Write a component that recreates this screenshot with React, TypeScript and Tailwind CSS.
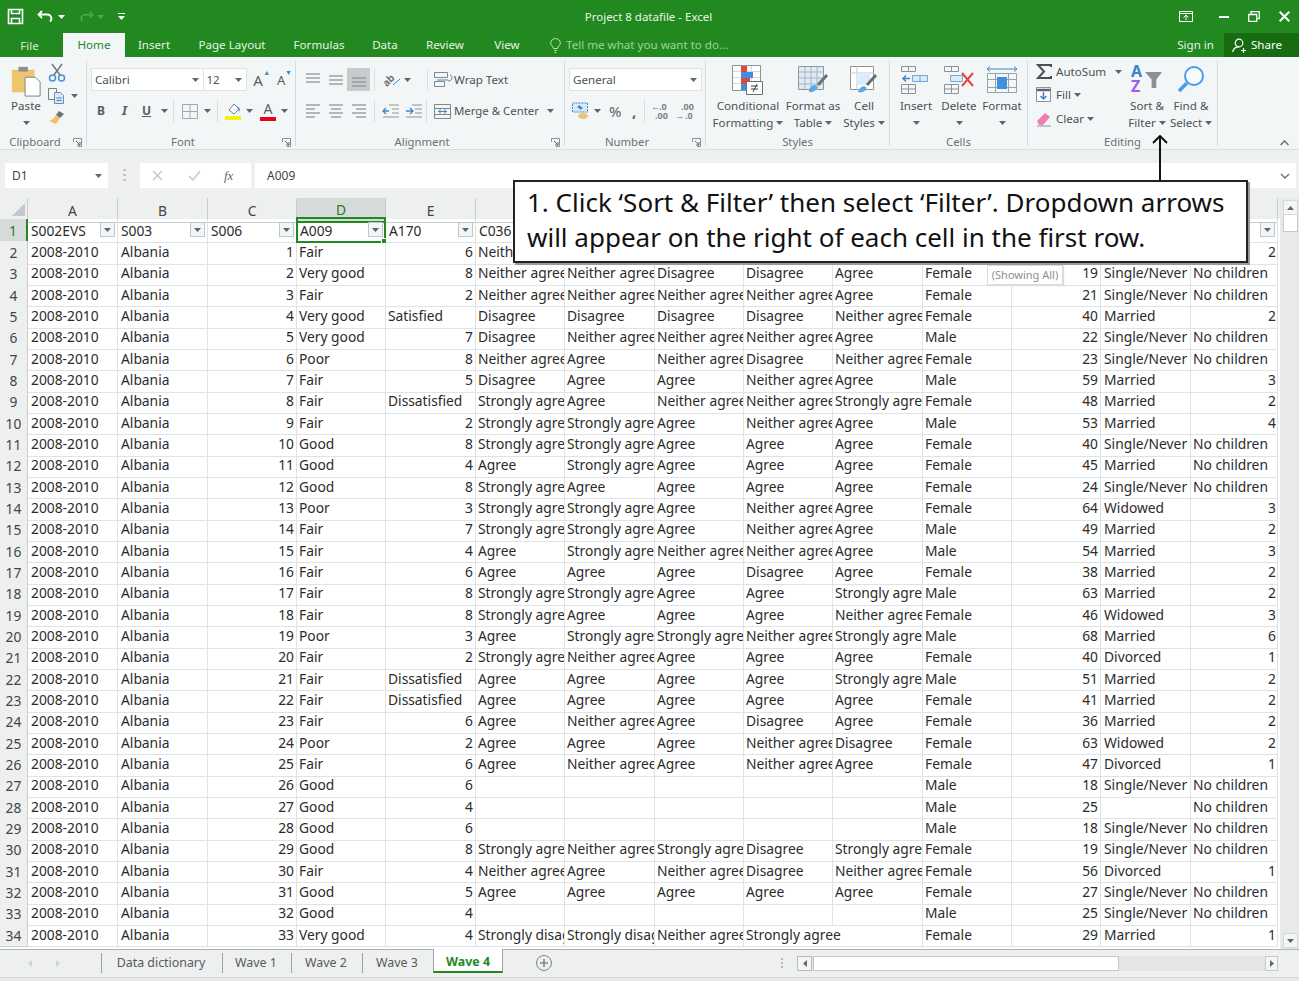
import React from 'react';

const F = "[font-family:'Noto_Sans','Liberation_Sans',sans-serif]";

const NA = 'Neither agree';
const SA = 'Strongly agree';
const SD = 'Strongly disagree';
const AG = 'Agree';
const DI = 'Disagree';
const SN = 'Single/Never';
const NC = 'No children';
const DS = 'Dissatisfied';

type Row = (string | number)[];

// C, D, E, F, G, H, I, J, K, L, M, N (row 2 is mostly behind the callout)
const ROWS: Row[] = [
  [1, 'Fair', 6, NA, '', '', '', '', '', '', '', 2],
  [2, 'Very good', 8, NA, NA, DI, DI, AG, 'Female', 19, SN, NC],
  [3, 'Fair', 2, NA, NA, NA, NA, AG, 'Female', 21, SN, NC],
  [4, 'Very good', 'Satisfied', DI, DI, DI, DI, NA, 'Female', 40, 'Married', 2],
  [5, 'Very good', 7, DI, NA, NA, NA, AG, 'Male', 22, SN, NC],
  [6, 'Poor', 8, NA, AG, NA, DI, NA, 'Female', 23, SN, NC],
  [7, 'Fair', 5, DI, AG, AG, NA, AG, 'Male', 59, 'Married', 3],
  [8, 'Fair', DS, SA, AG, NA, NA, SA, 'Female', 48, 'Married', 2],
  [9, 'Fair', 2, SA, SA, AG, NA, AG, 'Male', 53, 'Married', 4],
  [10, 'Good', 8, SA, SA, AG, AG, AG, 'Female', 40, SN, NC],
  [11, 'Good', 4, AG, SA, AG, AG, AG, 'Female', 45, 'Married', NC],
  [12, 'Good', 8, SA, AG, AG, AG, AG, 'Female', 24, SN, NC],
  [13, 'Poor', 3, SA, SA, AG, NA, AG, 'Female', 64, 'Widowed', 3],
  [14, 'Fair', 7, SA, SA, AG, NA, AG, 'Male', 49, 'Married', 2],
  [15, 'Fair', 4, AG, SA, NA, NA, AG, 'Male', 54, 'Married', 3],
  [16, 'Fair', 6, AG, AG, AG, DI, AG, 'Female', 38, 'Married', 2],
  [17, 'Fair', 8, SA, SA, AG, AG, SA, 'Male', 63, 'Married', 2],
  [18, 'Fair', 8, SA, AG, AG, AG, NA, 'Female', 46, 'Widowed', 3],
  [19, 'Poor', 3, AG, SA, SA, NA, SA, 'Male', 68, 'Married', 6],
  [20, 'Fair', 2, SA, NA, AG, AG, AG, 'Female', 40, 'Divorced', 1],
  [21, 'Fair', DS, AG, AG, AG, AG, SA, 'Male', 51, 'Married', 2],
  [22, 'Fair', DS, AG, AG, AG, AG, AG, 'Female', 41, 'Married', 2],
  [23, 'Fair', 6, AG, NA, AG, DI, AG, 'Female', 36, 'Married', 2],
  [24, 'Poor', 2, AG, AG, AG, NA, DI, 'Female', 63, 'Widowed', 2],
  [25, 'Fair', 6, AG, NA, AG, NA, AG, 'Female', 47, 'Divorced', 1],
  [26, 'Good', 6, '', '', '', '', '', 'Male', 18, SN, NC],
  [27, 'Good', 4, '', '', '', '', '', 'Male', 25, '', NC],
  [28, 'Good', 6, '', '', '', '', '', 'Male', 18, SN, NC],
  [29, 'Good', 8, SA, NA, SA, DI, SA, 'Female', 19, SN, NC],
  [30, 'Fair', 4, NA, AG, NA, DI, NA, 'Female', 56, 'Divorced', 1],
  [31, 'Good', 5, AG, AG, AG, AG, AG, 'Female', 27, SN, NC],
  [32, 'Good', 4, '', '', '', '', '', 'Male', 25, SN, NC],
  [33, 'Very good', 4, SD, SD, NA, SA, '', 'Female', 29, 'Married', 1],
];

const GRID = 'grid grid-cols-[28px_90px_90px_89px_89px_90px_89px_90px_89px_89px_90px_89px_89px_90px_87px]';

const Caret = ({ className = '' }: { className?: string }) => (
  <svg width="7" height="4" viewBox="0 0 7 4" className={className}>
    <path d="M0 0h7L3.500 4z" fill="#5f6668" />
  </svg>
);

const FilterBtn = () => (
  <span className="absolute right-[2px] top-[3px] flex h-[15px] w-[15px] items-center justify-center border border-[#b9c9cf] bg-[#f2f5f6]">
    <Caret />
  </span>
);

const Launcher = ({ className = '' }: { className?: string }) => (
  <svg width="9" height="9" viewBox="0 0 9 9" className={className}>
    <path d="M.5 4V.5H8.500V8.500H5" fill="none" stroke="#8b9193" />
    <path d="M3 3l4 4M7 4v3H4" fill="none" stroke="#62686a" />
  </svg>
);

const Lines = ({ kind }: { kind: 'left' | 'center' | 'right' }) => {
  const x = kind === 'left' ? [1, 1, 1, 1] : kind === 'center' ? [1, 3, 1, 3] : [1, 5, 1, 5];
  const w = kind === 'left' ? [14, 9, 14, 9] : [14, 10, 14, 10];
  return (
    <svg width="16" height="14" viewBox="0 0 16 14" fill="none" stroke="#8d9496" strokeWidth="1.300">
      {[1, 5, 9, 13].map((y, i) => <path key={y} d={`M${x[i]} ${y}h${w[i]}`} />)}
    </svg>
  );
};

const VAlign = ({ y }: { y: number }) => (
  <svg width="16" height="14" viewBox="0 0 16 14" fill="none" stroke="#8d9496" strokeWidth="1.300">
    {[0, 4, 8].map(d => <path key={d} d={`M1 ${y + d}h14`} />)}
  </svg>
);

const Sep = () => <span className="block h-[22px] w-px bg-[#d9dddf]" />;

const Group = ({ label, launcher, className, children }: { label: string; launcher?: boolean; className: string; children: React.ReactNode }) => (
  <div className={`relative flex h-[85px] shrink-0 flex-col border-r border-[#d6dadc] ${className}`}>
    <div className="h-[73px] w-full shrink-0">{children}</div>
    <div className={`h-[16px] shrink-0 text-center text-[11.300px] leading-[16px] text-[#6b7173] ${launcher ? 'pr-[16px]' : ''}`}>
      {label}
      {launcher && <Launcher className="absolute right-[4px] top-[77px]" />}
    </div>
  </div>
);

const Big = ({ icon, l1, l2, caret, className }: { icon: React.ReactNode; l1: string; l2?: string; caret?: boolean; className: string }) => (
  <div className={`flex shrink-0 flex-col items-center text-[11.600px] leading-[17px] text-[#4c5153] ${className}`}>
    <div className="flex h-[34px] items-start pt-[3px]">{icon}</div>
    <div className="mt-[1px] whitespace-nowrap">{l1}</div>
    <div className="flex h-[17px] items-center gap-[3px] whitespace-nowrap">{l2}{caret && <Caret />}</div>
  </div>
);

const CellIconWrap = ({ children }: { children: React.ReactNode }) => (
  <svg width="32" height="30" viewBox="0 0 32 30">{children}</svg>
);

const CellGrid = ({ children }: { children?: React.ReactNode }) => (
  <g stroke="#8b9496" fill="none">{children}</g>
);

export default function App() {
  return (
    <div className={`flex h-[981px] w-[1299px] flex-col overflow-hidden bg-[#eef0f0] ${F}`}>
      {/* title bar */}
      <div className="relative flex h-[33px] shrink-0 items-center bg-[#21891f] text-white">
        <div className="flex items-center pl-[7px]">
          <svg width="17" height="17" viewBox="0 0 17 17" fill="none" stroke="#fff" strokeWidth="1.600">
            <path d="M1.500 1.500h14v14h-14zM4.500 1.500v4h8v-4M4.500 15.500v-5h8v5" />
          </svg>
          <svg width="18" height="14" viewBox="0 0 18 14" fill="none" stroke="#fff" strokeWidth="1.800" className="ml-[13px]">
            <path d="M5 1L1.500 4.500 5 8M2 4.500h8a4 4 0 0 1 3 7" />
          </svg>
          <Caret className="ml-[3px] [&>path]:fill-white" />
          <svg width="16" height="14" viewBox="0 0 18 14" fill="none" stroke="#4fa84d" strokeWidth="1.800" className="ml-[13px]">
            <path d="M13 1l3.500 3.500L13 8M16 4.500H8a4 4 0 0 0-3 7" />
          </svg>
          <Caret className="ml-[3px] [&>path]:fill-[#4fa84d]" />
          <svg width="7" height="8" viewBox="0 0 7 8" className="ml-[14px]" fill="#fff">
            <path d="M0 0h7v1H0zM0 3h7L3.500 7z" />
          </svg>
        </div>
        <div className="absolute inset-x-0 top-[8px] pr-[2px] text-center text-[11.500px] leading-[17px] text-[#e9f4e9]">Project 8 datafile - Excel</div>
        <div className="ml-auto flex items-center pr-[9px]">
          <svg width="14" height="12" viewBox="0 0 14 12" fill="none" stroke="#fff">
            <path d="M.5.500h13v10H.5zM.5 2.500h13" />
            <path d="M7 9V4.500M4.500 6.500L7 4l2.500 2.500" />
          </svg>
          <span className="ml-[26px] h-[2px] w-[10px] bg-white" />
          <svg width="12" height="11" viewBox="0 0 12 11" fill="none" stroke="#fff" strokeWidth="1.300" className="ml-[19px]">
            <path d="M.7 3.500h8v7h-8zM3 3.500V.7h8.300v7H8.700" />
          </svg>
          <svg width="11" height="11" viewBox="0 0 11 11" fill="none" stroke="#fff" strokeWidth="2" className="ml-[19px]">
            <path d="M.7.700l9.600 9.600M10.300.700L.7 10.300" />
          </svg>
        </div>
      </div>

      {/* tabs */}
      <div className="flex h-[24px] shrink-0 items-stretch bg-[#21891f] text-[11.600px] text-[#e6f3e6]">
        <div className="flex w-[59px] items-center justify-center pt-[2px] text-[#d6ecd6]">File</div>
        <div className="ml-[4px] flex w-[62px] items-center justify-center bg-[#f3f6f7] text-[#21891f]">Home</div>
        <div className="flex w-[58px] items-center justify-center">Insert</div>
        <div className="flex w-[98px] items-center justify-center">Page Layout</div>
        <div className="flex w-[76px] items-center justify-center">Formulas</div>
        <div className="flex w-[56px] items-center justify-center">Data</div>
        <div className="flex w-[64px] items-center justify-center">Review</div>
        <div className="flex w-[60px] items-center justify-center">View</div>
        <div className="ml-[13px] flex items-center gap-[5px] text-[#9ed39d]">
          <svg width="11" height="15" viewBox="0 0 11 15" fill="none" stroke="#b9e0b8">
            <path d="M3.500 10.500C3 8 .7 7.500.7 5a4.800 4.500 0 0 1 9.600 0c0 2.500-2.300 3-2.800 5.500zM4 12.500h3M4.500 14.500h2" />
          </svg>
          Tell me what you want to do...
        </div>
        <div className="ml-auto flex items-center pr-[10px]">Sign in</div>
        <div className="flex w-[75px] items-center gap-[4px] bg-[#176c12] pl-[8px] text-white">
          <svg width="15" height="15" viewBox="0 0 15 15" fill="none" stroke="#fff" strokeWidth="1.200">
            <circle cx="7" cy="5" r="3.800" />
            <path d="M.7 14c.5-3.500 3-5.200 6.300-5.200M9 12.500h5M11.500 10v5" />
          </svg>
          Share
        </div>
      </div>

      {/* ribbon */}
      <div className="relative flex h-[93px] shrink-0 items-start border-b border-[#dcdfe0] bg-[#f3f6f7] pt-[4px]">
        <Group label="Clipboard" launcher className="w-[87px]">
          <div className="flex pt-[1px]">
            <Big
              className="ml-[8px] w-[36px]"
              l1="Paste"
              caret
              icon={
                <svg width="32" height="32" viewBox="0 0 32 34">
                  <path d="M1 5h24v24H1z" fill="#efc46f" />
                  <path d="M8 2h10v5H8z" fill="#8a8f91" />
                  <path d="M15 13h11l5 5v15H15z" fill="#fff" stroke="#777d7f" />
                </svg>
              }
            />
            <div className="ml-[4px] flex flex-col items-start pt-[1px]">
              <svg width="18" height="19" viewBox="0 0 18 19" fill="none">
                <path d="M4 1l8 11M14 1L6 12" stroke="#6d7476" strokeWidth="1.400" />
                <circle cx="4.500" cy="15" r="3" stroke="#4a90d9" strokeWidth="1.500" />
                <circle cx="13.500" cy="15" r="3" stroke="#4a90d9" strokeWidth="1.500" />
              </svg>
              <div className="mt-[6px] flex items-center gap-[6px]">
                <svg width="17" height="16" viewBox="0 0 17 16" fill="none" stroke="#7a8183">
                  <path d="M.5.500h8v11h-8z" fill="#f6f7f7" />
                  <path d="M6.500 4.500h6l3 3v8h-9z" fill="#dbe7f3" stroke="#6b8db0" />
                  <path d="M8.500 10h5M8.500 12.500h5" stroke="#3d84cc" />
                </svg>
                <Caret />
              </div>
              <svg width="17" height="15" viewBox="0 0 17 15" className="mt-[6px]">
                <path d="M11 1l5 3-4 4-4-3z" fill="#6d7476" />
                <path d="M8 5l4 3-4 6-7-3 4-2z" fill="#efbf6a" />
              </svg>
            </div>
          </div>
        </Group>

        <Group label="Font" launcher className="w-[209px]">
          <div className="pl-[4px] pt-[7px]">
            <div className="flex items-center">
              <div className="flex h-[23px] w-[113px] items-center justify-between border border-r-0 border-[#e0e3e4] bg-white pl-[3px] pr-[4px] pt-[1px] text-[11.600px] text-[#4c5153]">
                Calibri <Caret />
              </div>
              <div className="flex h-[23px] w-[44px] items-center justify-between border border-[#e0e3e4] bg-white pl-[2px] pr-[4px] pt-[1px] text-[11.600px] text-[#4c5153]">
                12 <Caret />
              </div>
              <span className="relative ml-[6px] w-[20px] text-[15px] leading-[20px] text-[#5a6062]">A<span className="absolute -top-[2px] left-[10px] text-[7px] leading-[10px] text-[#3d84cc]">▲</span></span>
              <span className="relative ml-[4px] w-[18px] text-[13px] leading-[20px] text-[#5a6062]">A<span className="absolute -top-[2px] left-[8px] text-[7px] leading-[10px] text-[#3d84cc]">▼</span></span>
            </div>
            <div className="mt-[8px] flex h-[24px] items-center text-[#5a6062]">
              <span className="w-[20px] pl-[6px] text-[12px] font-bold">B</span>
              <span className="ml-[9px] w-[18px] pl-[2px] text-[13px] font-bold italic">I</span>
              <span className="ml-[4px] w-[16px] text-[12px] font-bold underline">U</span>
              <Caret className="ml-[3px]" />
              <span className="ml-[5px]"><Sep /></span>
              <svg width="16" height="15" viewBox="0 0 16 15" fill="none" stroke="#a3a9ab" className="ml-[8px]">
                <path d="M.5.500h15v14H.5zM8 .500v14M.5 7.500h15" />
              </svg>
              <Caret className="ml-[6px]" />
              <span className="ml-[6px]"><Sep /></span>
              <svg width="18" height="20" viewBox="0 0 18 20" className="ml-[6px]">
                <path d="M5 9l5-6 5 5-5 5z" fill="#fff" stroke="#777d7f" />
                <path d="M13 5l3 3-1 3z" fill="#3d84cc" />
                <path d="M1 15h16v4H1z" fill="#f2f20c" />
              </svg>
              <Caret className="ml-[4px]" />
              <span className="relative ml-[7px] flex h-[20px] w-[16px] justify-center text-[14px] leading-[16px] text-[#5a6062]">
                A<span className="absolute bottom-0 h-[4px] w-[16px] bg-[#e8001c]" />
              </span>
              <Caret className="ml-[5px]" />
            </div>
          </div>
        </Group>

        <Group label="Alignment" launcher className="w-[269px]">
          <div className="pl-[6px] pt-[7px]">
            <div className="flex h-[23px] items-center">
              <span className="flex w-[22px] justify-center"><VAlign y={1} /></span>
              <span className="flex w-[23px] justify-center"><VAlign y={3} /></span>
              <span className="flex h-[23px] w-[23px] items-center justify-center bg-[#c6cbcc]"><VAlign y={5} /></span>
              <span className="ml-[4px]"><Sep /></span>
              <span className="relative ml-[7px] flex h-[16px] w-[19px] items-center">
                <span className="block -rotate-45 text-[10px] font-bold leading-[10px] text-[#6a7173]">ab</span>
                <svg width="9" height="9" viewBox="0 0 9 9" fill="none" stroke="#3d84cc" className="absolute right-0 top-[5px]"><path d="M1 8l7-6" /></svg>
              </span>
              <Caret className="ml-[3px]" />
              <span className="ml-[16px]"><Sep /></span>
              <svg width="20" height="16" viewBox="0 0 20 16" fill="none" stroke="#80888a" className="ml-[6px]">
                <path d="M.5.500h13v5H.5zM.5 9.500h10v5H.5z" />
                <path d="M3 8h11" stroke="#3d84cc" />
                <path d="M16 3c3 1 3 6-2 6" stroke="#3d84cc" />
              </svg>
              <span className="text-[11.600px] text-[#4c5153]">Wrap Text</span>
            </div>
            <div className="mt-[8px] flex h-[24px] items-center">
              <span className="flex w-[22px] justify-center"><Lines kind="left" /></span>
              <span className="flex w-[23px] justify-center"><Lines kind="center" /></span>
              <span className="flex w-[23px] justify-center"><Lines kind="right" /></span>
              <span className="ml-[4px]"><Sep /></span>
              <svg width="18" height="14" viewBox="0 0 18 14" fill="none" stroke="#8d9496" className="ml-[7px]">
                <path d="M7 1h10M10 5h7M10 9h7M1 13h16" />
                <path d="M7 7H1M4 4L1 7l3 3" stroke="#3d84cc" strokeWidth="1.300" />
              </svg>
              <svg width="18" height="14" viewBox="0 0 18 14" fill="none" stroke="#8d9496" className="ml-[5px]">
                <path d="M7 1h10M10 5h7M10 9h7M1 13h16" />
                <path d="M1 7h7M5 4l3 3-3 3" stroke="#3d84cc" strokeWidth="1.300" />
              </svg>
              <span className="ml-[3px]"><Sep /></span>
              <svg width="18" height="15" viewBox="0 0 18 15" fill="none" stroke="#80888a" className="ml-[7px]">
                <path d="M.5.500h16v14H.5zM.5 4.500h16M.5 10.500h16M6 4.500v6M11 4.500v6" />
                <path d="M4 7.500h9" stroke="#3d84cc" />
              </svg>
              <span className="ml-[2px] text-[11.400px] text-[#4c5153]">Merge &amp; Center</span>
              <Caret className="ml-[8px]" />
            </div>
          </div>
        </Group>

        <Group label="Number" launcher className="w-[141px]">
          <div className="pl-[4px] pt-[7px]">
            <div className="flex h-[23px] w-[133px] items-center justify-between border border-[#e0e3e4] bg-white pl-[3px] pr-[4px] pt-[1px] text-[11.600px] text-[#4c5153]">
              General <Caret />
            </div>
            <div className="mt-[8px] flex h-[24px] items-center">
              <svg width="18" height="18" viewBox="0 0 18 18" className="ml-[3px]">
                <path d="M.5 1h15v9H.5z" fill="#dbe9f7" stroke="#3d84cc" strokeDasharray="2 1" />
                <path d="M5 5l3-2v4zM11 6L8 8V4z" fill="#3d84cc" />
                <ellipse cx="11" cy="14" rx="5" ry="3" fill="#efc46f" />
              </svg>
              <Caret className="ml-[4px]" />
              <span className="ml-[8px] w-[20px] text-[15px] leading-[20px] text-[#5a6062]">%</span>
              <span className="ml-[3px] w-[10px] text-[15px] font-bold leading-[18px] text-[#5a6062]">,</span>
              <span className="ml-[2px]"><Sep /></span>
              <span className="relative ml-[6px] h-[18px] w-[20px] text-[9px] font-bold leading-[9px] text-[#7b8284]">
                <span className="block pl-[8px]">.0</span><span className="block pl-[4px]">.00</span>
                <span className="absolute left-0 top-0 text-[9px] leading-[9px] text-[#3d84cc]">←</span>
              </span>
              <span className="relative ml-[4px] h-[18px] w-[20px] text-[9px] font-bold leading-[9px] text-[#7b8284]">
                <span className="block pl-[6px]">.00</span><span className="block pl-[10px]">.0</span>
                <span className="absolute bottom-0 left-0 text-[9px] leading-[9px] text-[#3d84cc]">→</span>
              </span>
            </div>
          </div>
        </Group>

        <Group label="Styles" className="w-[184px]">
          <div className="flex pl-[7px] pt-[1px]">
            <Big
              className="w-[70px]"
              l1="Conditional"
              l2="Formatting"
              caret
              icon={
                <svg width="32" height="31" viewBox="0 0 32 31">
                  <path d="M.5.500h28v25H.5z" fill="#fff" stroke="#8b9496" />
                  <path d="M9.500 1v24M19.500 1v24M1 6.500h27M1 12.500h27M1 18.500h27" stroke="#d5d9da" />
                  <path d="M9 1h6v6H9zM9 13h9v6H9z" fill="#e0473c" />
                  <path d="M9 7h12v6H9zM9 19h5v6H9z" fill="#3f8fe0" />
                  <path d="M14.500 16.500h16v13h-16z" fill="#fff" stroke="#6a7173" />
                  <path d="M19 21h7M19 24h7M25 19l-4 8" fill="none" stroke="#3d4244" />
                </svg>
              }
            />
            <Big
              className="w-[60px]"
              l1="Format as"
              l2="Table"
              caret
              icon={
                <svg width="32" height="31" viewBox="0 0 32 31">
                  <path d="M1.500 1.500h25v23h-25z" fill="#dcecf8" stroke="#8b9496" />
                  <path d="M1.500 7h25M1.500 13h25M1.500 19h25M8 1.500v23M14 1.500v23M20 1.500v23" stroke="#aab2b5" />
                  <path d="M12 25c2-5 6-6 8-4s-3 7-8 6z" fill="#58a8ea" />
                  <path d="M21 20l9-10" stroke="#6a7173" strokeWidth="3" />
                </svg>
              }
            />
            <Big
              className="w-[42px]"
              l1="Cell"
              l2="Styles"
              caret
              icon={
                <svg width="30" height="31" viewBox="0 0 30 31">
                  <path d="M1.500 1.500h23v23h-23z" fill="#fff" stroke="#8b9496" />
                  <path d="M1.500 8h23M8 1.500v23" stroke="#c5cacb" />
                  <path d="M8 8h13v12H8z" fill="#dcecf8" />
                  <path d="M9 27c1-5 6-7 8-5s-3 7-8 5z" fill="#58a8ea" />
                  <path d="M18 20l9-10" stroke="#6a7173" strokeWidth="3" />
                </svg>
              }
            />
          </div>
        </Group>

        <Group label="Cells" className="w-[138px]">
          <div className="flex pl-[4px] pt-[1px]">
            <Big
              className="w-[44px]"
              l1="Insert"
              caret
              icon={
                <CellIconWrap>
                  <CellGrid>
                    <path d="M1.500 1.500h14v5h-14zM8.500 1.500v5M1.500 19.500h14v9h-14zM1.500 24h14M8.500 19.500v9" />
                    <path d="M12.500 10.500h15v6h-15zM20 10.500v6" stroke="#6ea7d8" fill="#dcecf8" />
                  </CellGrid>
                  <path d="M10 13.500H3M6 10.500l-3 3 3 3" fill="none" stroke="#3d84cc" strokeWidth="1.500" />
                </CellIconWrap>
              }
            />
            <Big
              className="w-[42px]"
              l1="Delete"
              caret
              icon={
                <CellIconWrap>
                  <CellGrid>
                    <path d="M1.500 1.500h14v5h-14zM8.500 1.500v5M1.500 19.500h14v9h-14zM1.500 24h14M8.500 19.500v9" />
                    <path d="M7.500 10.500h12v6h-12z" stroke="#6ea7d8" fill="#dcecf8" />
                  </CellGrid>
                  <path d="M19 8l11 13M30 8L19 21" fill="none" stroke="#e0473c" strokeWidth="2" />
                </CellIconWrap>
              }
            />
            <Big
              className="w-[44px]"
              l1="Format"
              caret
              icon={
                <svg width="32" height="31" viewBox="0 0 32 31" fill="none">
                  <path d="M1 4h30M4 1.500l-3 2.500 3 2.500M28 1.500l3 2.500-3 2.500" stroke="#3d84cc" />
                  <path d="M1.500 8.500h29v19h-29zM9.500 8.500v19M22.500 8.500v19M1.500 14.500h29M1.500 22.500h29" stroke="#9aa2a4" />
                  <path d="M11 12h10v12H11z" fill="#3f8fe0" />
                </svg>
              }
            />
          </div>
        </Group>

        <Group label="Editing" className="w-[190px]">
          <div className="flex pl-[8px]">
            <div className="-mt-[1px] w-[89px] text-[11.600px] text-[#4c5153]">
              <div className="flex h-[23px] items-center">
                <svg width="16" height="15" viewBox="0 0 16 15" fill="none" stroke="#4a5052" strokeWidth="2" className="mr-[4px]">
                  <path d="M15 3V1H2l6 6.500L2 14h13v-2" />
                </svg>
                AutoSum
                <Caret className="ml-[9px]" />
              </div>
              <div className="flex h-[24px] items-center">
                <svg width="16" height="16" viewBox="0 0 16 16" fill="none" className="mr-[4px]">
                  <path d="M.5.500h14v14H.5z" stroke="#8b9496" fill="#fff" />
                  <path d="M.5 3h14" stroke="#5f6668" strokeWidth="2.500" />
                  <path d="M7.500 5v7M4.500 9l3 3 3-3" stroke="#3d84cc" strokeWidth="1.500" />
                </svg>
                Fill
                <Caret className="ml-[3px]" />
              </div>
              <div className="flex h-[24px] items-center">
                <svg width="16" height="15" viewBox="0 0 16 15" className="mr-[4px]">
                  <path d="M1 9l8-8 5 4-7 8H3z" fill="#f27cb2" />
                  <path d="M1 14h14" stroke="#8b9496" />
                </svg>
                Clear
                <Caret className="ml-[3px]" />
              </div>
            </div>
            <div className="flex pt-[1px]">
              <Big
                className="w-[44px]"
                l1="Sort &"
                l2="Filter"
                caret
                icon={
                  <span className="relative block h-[29px] w-[30px]">
                    <span className="absolute -left-[1px] top-[-2px] text-[16px] font-bold leading-[16px] text-[#3d84cc]">A</span>
                    <span className="absolute -left-[1px] top-[13px] text-[16px] font-bold leading-[16px] text-[#9b5de5]">Z</span>
                    <svg width="17" height="17" viewBox="0 0 18 18" className="absolute left-[13px] top-[7px]">
                      <path d="M0 0h18l-6 8v9H7V8z" fill="#8a9092" />
                    </svg>
                  </span>
                }
              />
              <Big
                className="w-[44px]"
                l1="Find &"
                l2="Select"
                caret
                icon={
                  <svg width="30" height="30" viewBox="0 0 30 30" fill="none" stroke="#4a9be8">
                    <circle cx="18" cy="11" r="9" strokeWidth="2" fill="#f8fbfe" />
                    <path d="M11 18L3 26" strokeWidth="3.500" />
                  </svg>
                }
              />
            </div>
          </div>
        </Group>

        <svg width="9" height="6" viewBox="0 0 9 6" fill="none" stroke="#6a7173" strokeWidth="1.500" className="ml-auto mr-[10px] mt-[79px]">
          <path d="M.5 5l4-4 4 4" />
        </svg>
      </div>

      {/* formula bar */}
      <div className="flex h-[48px] shrink-0 items-start bg-[#eef0f0] pt-[13px]">
        <div className="ml-[5px] flex h-[25px] w-[103px] items-center justify-between bg-white pl-[7px] pr-[6px] text-[12px] text-[#444]">
          D1 <Caret />
        </div>
        <div className="ml-[15px] mt-[6px] flex h-[12px] w-[3px] flex-col justify-between">
          <span className="h-[2px] bg-[#c2c6c7]" /><span className="h-[2px] bg-[#c2c6c7]" /><span className="h-[2px] bg-[#c2c6c7]" />
        </div>
        <div className="ml-[14px] flex h-[25px] w-[111px] items-center bg-white pl-[12px]">
          <svg width="11" height="11" viewBox="0 0 11 11" stroke="#c5c9ca" strokeWidth="1.500" fill="none"><path d="M1 1l9 9M10 1l-9 9" /></svg>
          <svg width="13" height="11" viewBox="0 0 13 11" stroke="#c5c9ca" strokeWidth="1.500" fill="none" className="ml-[25px]"><path d="M1 6l4 4 7-9" /></svg>
          <span className="ml-[23px] text-[13px] italic text-[#666] [font-family:'Liberation_Serif',serif]">fx</span>
        </div>
        <div className="ml-[4px] flex h-[25px] w-[1041px] items-center justify-between bg-white pl-[12px] pr-[6px] text-[12px] text-[#444]">
          A009
          <svg width="10" height="6" viewBox="0 0 10 6" fill="none" stroke="#777" strokeWidth="1.500"><path d="M1 1l4 4 4-4" /></svg>
        </div>
      </div>

      {/* sheet */}
      <div className="flex h-[751px] shrink-0 overflow-hidden">
        <div className="w-[1280px] shrink-0 overflow-hidden bg-white text-[13.800px] text-[#2b2b2b]">
          <div className={`${GRID} h-[21px] bg-[#eef0f0] text-[#444]`}>
            <div className="flex items-center justify-end border-b border-r border-[#c9cdce] pr-[2px]">
              <svg width="13" height="13" viewBox="0 0 13 13"><path d="M13 0v13H0z" fill="#c4c8c9" /></svg>
            </div>
            {['A', 'B', 'C', 'D', 'E', 'F', 'G', 'H', 'I', 'J', 'K', 'L', 'M', 'N'].map(c => (
              c === 'D'
                ? <div key={c} className="flex items-center justify-center border-b-2 border-r border-b-[#21891f] border-r-[#c9cdce] bg-[#d6dbda] pt-[2px] text-[#1f7a1d]">{c}</div>
                : <div key={c} className="flex items-center justify-center border-b border-r border-[#c9cdce] pt-[2px]">{c}</div>
            ))}
          </div>
          <div className={`${GRID} h-[22px]`}>
            <div className="flex items-center justify-center border-b border-r-2 border-b-[#c9cdce] border-r-[#21891f] bg-[#d6dbda] pt-[2px] text-[#1f7a1d]">1</div>
            {['S002EVS', 'S003', 'S006', 'A009', 'A170', 'C036', '', '', '', '', '', '', '', ''].map((h, i) => (
              <div key={i} className="relative whitespace-nowrap border-b border-r border-[#dfe3e3] pl-[3px] leading-[23px]">
                {h}
                <FilterBtn />
                {h === 'A009' && (
                  <span className="absolute -left-px -top-[2px] bottom-[-1px] right-[-1px] border-2 border-[#21891f]">
                    <span className="absolute -bottom-[3px] -right-[3px] h-[6px] w-[6px] border border-white bg-[#21891f]" />
                  </span>
                )}
              </div>
            ))}
          </div>
          {ROWS.map((r, i) => (
            <div key={i} className={`${GRID} h-[21.340px]`}>
              <div className="flex items-center justify-center border-b border-r border-[#c9cdce] bg-[#eef0f0] pt-[2px] text-[#444]">{i + 2}</div>
              <div className="overflow-hidden whitespace-nowrap border-b border-r border-[#dfe3e3] pl-[3px] leading-[22px]">2008-2010</div>
              <div className="overflow-hidden whitespace-nowrap border-b border-r border-[#dfe3e3] pl-[3px] leading-[22px]">Albania</div>
              {r.slice(0, 12).map((v, j) => {
                const overflow = v === SA && i === 32;
                const align = typeof v === 'number' ? (j === 11 ? 'pr-px text-right' : 'pr-[2px] text-right') : j === 10 ? 'pl-[3px]' : 'pl-[2px]';
                return (
                  <div
                    key={j}
                    className={`${overflow ? 'relative z-10 overflow-visible border-r-0' : 'overflow-hidden border-r'} whitespace-nowrap border-b border-[#dfe3e3] leading-[22px] ${align}`}
                  >
                    {v}
                  </div>
                );
              })}
            </div>
          ))}
        </div>
        <div className="flex w-[19px] shrink-0 flex-col items-center bg-[#e8eaea] pl-[1px] pt-[2px]">
          <span className="flex h-[15px] w-[15px] items-center justify-center border border-[#d4d8d9] bg-[#f4f6f6]"><Caret className="rotate-180" /></span>
          <span className="h-[17px] w-[15px] border border-t-0 border-[#c6cacb] bg-white" />
          <span className="mt-auto mb-[1px] flex h-[15px] w-[15px] items-center justify-center border border-[#d4d8d9] bg-[#f4f6f6]"><Caret /></span>
        </div>
      </div>

      {/* sheet tabs */}
      <div className="flex h-[28px] shrink-0 items-stretch border-t border-[#aeb3b4] bg-[#eef0f0] pb-[4px] pt-[3px] text-[12.400px] text-[#555b5d]">
        <div className="flex w-[102px] items-center gap-[24px] border-r border-[#9ca2a3] pl-[28px]">
          <svg width="4" height="7" viewBox="0 0 4 7"><path d="M4 0v7L0 3.500z" fill="#cfd3d4" /></svg>
          <svg width="4" height="7" viewBox="0 0 4 7"><path d="M0 0v7l4-3.500z" fill="#cfd3d4" /></svg>
        </div>
        <div className="flex w-[121px] items-center justify-center border-r border-[#9ca2a3] pr-[2px]">Data dictionary</div>
        <div className="flex w-[69px] items-center justify-center border-r border-[#9ca2a3] pr-[2px]">Wave 1</div>
        <div className="flex w-[71px] items-center justify-center border-r border-[#9ca2a3] pr-[2px]">Wave 2</div>
        <div className="flex w-[70px] items-center justify-center pr-[2px]">Wave 3</div>
        <div className="-mt-[4px] flex w-[70px] items-center justify-center border-x border-b-2 border-x-[#9ca2a3] border-b-[#21891f] bg-white pt-[5px] font-bold text-[#21891f]">Wave 4</div>
        <svg width="16" height="16" viewBox="0 0 16 16" fill="none" stroke="#7d8385" className="ml-[33px] self-center">
          <circle cx="8" cy="8" r="7.500" />
          <path d="M4 8h8M8 4v8" strokeWidth="1.500" />
        </svg>
        <div className="ml-auto flex items-center">
          <div className="mr-[14px] flex h-[10px] w-[2px] flex-col justify-between">
            <span className="h-[2px] bg-[#b4b8b9]" /><span className="h-[2px] bg-[#b4b8b9]" /><span className="h-[2px] bg-[#b4b8b9]" />
          </div>
          <div className="flex h-[15px] w-[481px] items-stretch bg-[#e4e6e6]">
            <span className="flex w-[15px] items-center justify-center border border-[#b6babb] bg-[#f4f6f6]"><svg width="4" height="7" viewBox="0 0 4 7"><path d="M4 0v7L0 3.500z" fill="#666" /></svg></span>
            <span className="ml-px w-[306px] border border-[#c2c6c7] bg-white" />
            <span className="ml-auto flex w-[13px] items-center justify-center border border-[#c6cacb] bg-[#f4f6f6]"><svg width="4" height="7" viewBox="0 0 4 7"><path d="M0 0v7l4-3.500z" fill="#666" /></svg></span>
          </div>
          <span className="w-[21px]" />
        </div>
      </div>
      <div className="flex-1 border-t border-[#d4d8d9] bg-[#e9ebeb]" />

      {/* callout */}
      <div className="absolute left-[513px] top-[180px] h-[83px] w-[735px] border-2 border-[#222] bg-white pl-[12px] pt-[3px] text-[26px] leading-[35px] text-[#111] shadow-[2px_2px_0_#9a9a9a]">
        <div className="whitespace-nowrap">1. Click ‘Sort &amp; Filter’ then select ‘Filter’. Dropdown arrows</div>
        <div className="whitespace-nowrap">will appear on the right of each cell in the first row.</div>
      </div>
      <svg width="18" height="46" viewBox="0 0 18 46" fill="none" stroke="#111" strokeWidth="2" className="absolute left-[1151px] top-[135px]">
        <path d="M9 1v44M2 8l7-7 7 7" />
      </svg>

      {/* filter tooltip */}
      <div className="absolute left-[987px] top-[265px] flex h-[20px] w-[76px] items-center justify-center border border-[#d8dcdd] bg-white text-[11px] text-[#8a9092] shadow-[1px_1px_1px_#ddd]">(Showing All)</div>
    </div>
  );
}
